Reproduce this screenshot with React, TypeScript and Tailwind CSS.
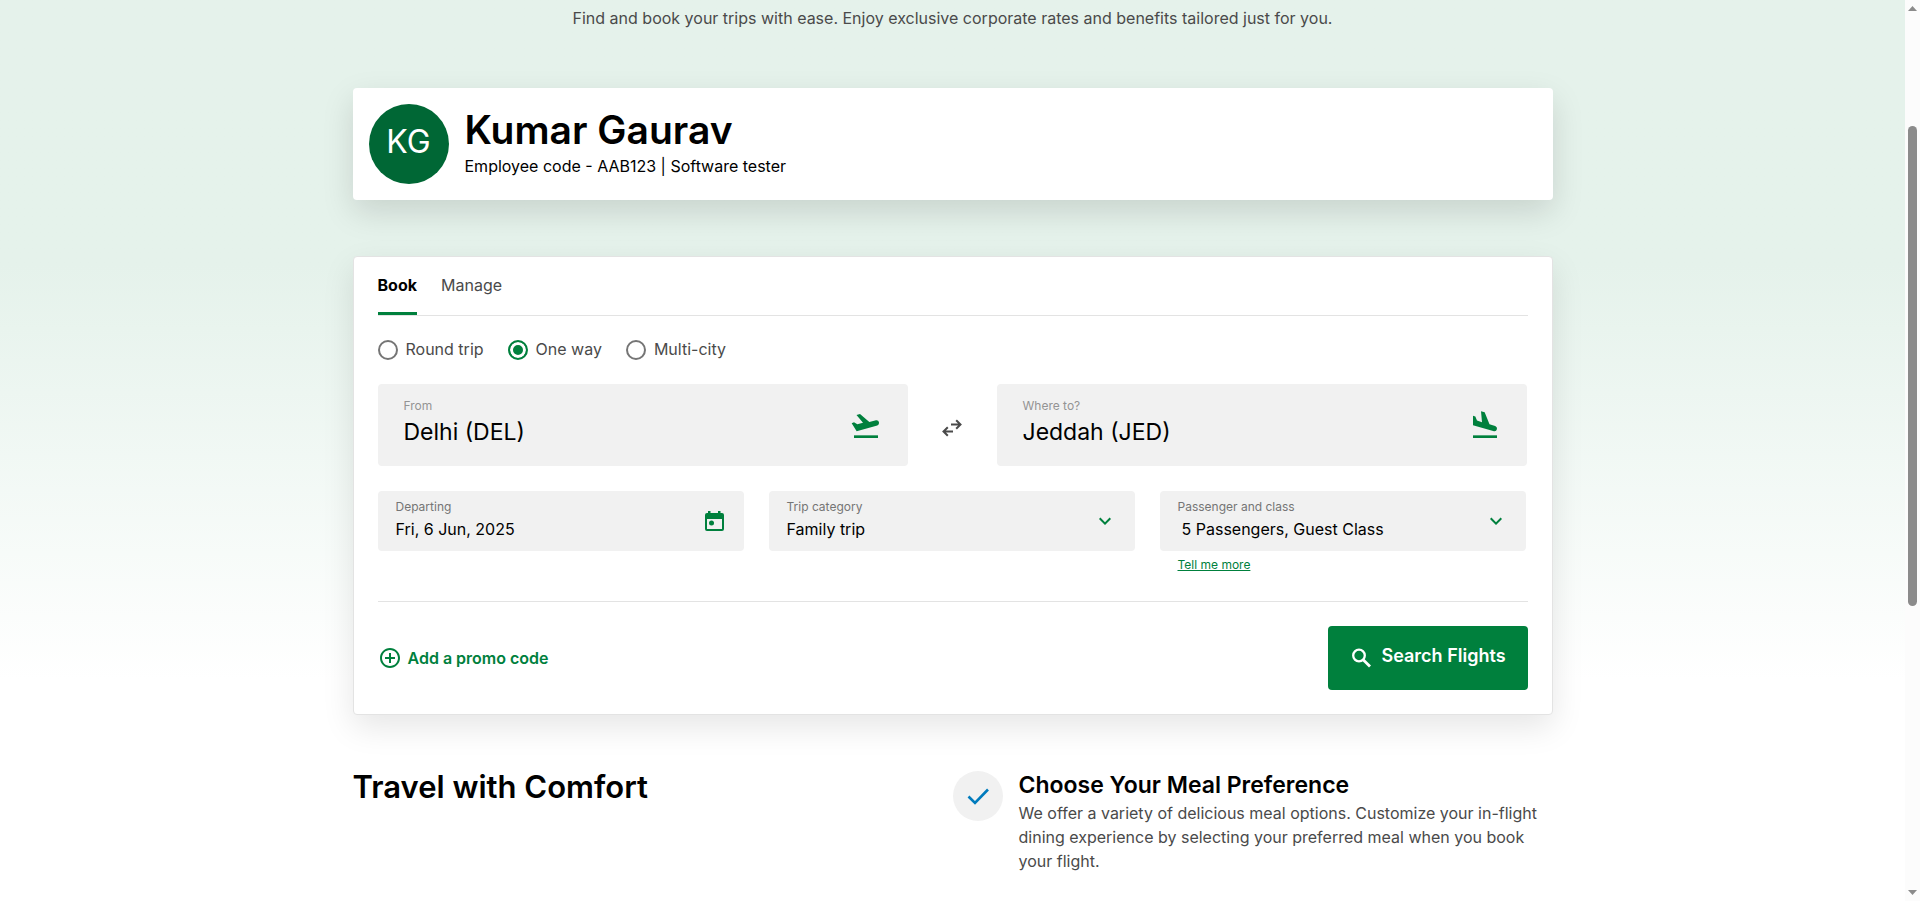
import React, { useState } from "react";
import { MdAddCircleOutline, MdExpandMore } from "react-icons/md";

const TRIP_TYPES = ["Round trip", "One way", "Multi-city"];

const BENEFITS = [
  {
    title: "Choose Your Meal Preference",
    body: "We offer a variety of delicious meal options. Customize your in-flight dining experience by selecting your preferred meal when you book your flight.",
  },
];

function TakeoffIcon() {
  return (
    <svg viewBox="30 27 96 96" className="size-8" fill="currentColor" aria-hidden="true">
      <path d="M35 69.500 42 67l10 6 17-4.500L49.500 45 60 42l28 24 20-5q7.500-1 9 6t-5 9.500L50 94z" />
      <path d="M42 106h72v8H42z" />
    </svg>
  );
}

function LandingIcon() {
  return (
    <svg viewBox="87 27 96 96" className="size-8" fill="currentColor" aria-hidden="true">
      <path d="M99 47.500l7 2 5 12 15 5.500-3-33 11 3 14.500 36 17 5q6.500 2.500 5.500 9-2 7.500-9 6.500L99 76z" />
      <path d="M99 106h72v8H99z" />
    </svg>
  );
}

function CalendarIcon() {
  return (
    <svg viewBox="0 0 24 24" className="size-6 shrink-0 text-[#00803d]" fill="currentColor" aria-hidden="true">
      <path fillRule="evenodd" d="M6 2h2.500v2h7.500V2h2.500v2H20a2 2 0 0 1 2 2v14a2 2 0 0 1-2 2H5a2 2 0 0 1-2-2V6a2 2 0 0 1 2-2h1zM5 10v10h15V10z" />
      <circle cx="9.500" cy="14" r="2.500" />
    </svg>
  );
}

function SearchIcon() {
  return (
    <svg viewBox="0 0 24 24" className="size-6" fill="none" stroke="currentColor" strokeWidth="2.300" aria-hidden="true">
      <circle cx="10" cy="9.500" r="5.800" />
      <path d="M14.200 13.700 21 20.500" strokeWidth="2.800" />
    </svg>
  );
}

function SwapIcon() {
  return (
    <svg viewBox="0 0 20 18" className="h-[18px] w-5" fill="none" stroke="currentColor" strokeWidth="2" aria-hidden="true">
      <path d="M9 5.500h9.500M14.200 1.200 18.500 5.500l-4.300 4.300M11 12.500H1.500M5.800 8.200 1.500 12.500l4.300 4.300" />
    </svg>
  );
}

function CheckBadge() {
  return (
    <span className="flex size-[50px] shrink-0 items-center justify-center rounded-full bg-[#f1f1f1] text-[#007bbd]">
      <svg viewBox="0 0 24 24" className="size-6" fill="none" stroke="currentColor" strokeWidth="2.600" aria-hidden="true">
        <path d="M2.500 12.500 9 19 22 5.500" />
      </svg>
    </span>
  );
}

function AirportField({ id, label, value, icon }: { id: string; label: string; value: string; icon: React.ReactNode }) {
  return (
    <div className="flex h-[82px] min-w-0 flex-1 items-center rounded bg-[#f1f1f1] px-[26px]">
      <div className="flex min-w-0 flex-1 flex-col pb-0.5">
        <label htmlFor={id} className="text-xs leading-4 text-[#949494]">{label}</label>
        <input id={id} defaultValue={value} className="w-full bg-transparent text-[23px] leading-9 text-black outline-none" />
      </div>
      <span className="text-[#00803d]">{icon}</span>
    </div>
  );
}

export default function App() {
  const [tripType, setTripType] = useState("One way");

  return (
    <div className="flex h-screen overflow-hidden bg-white font-['Inter','Liberation_Sans',sans-serif] text-base text-black">
      <main className="min-w-0 flex-1 overflow-hidden bg-linear-to-b from-[#e5f2eb] from-[265px] to-white to-[680px]">
        <p className="pt-1.5 text-center leading-6 text-[#4a4a4a]">
          Find and book your trips with ease. Enjoy exclusive corporate rates and benefits tailored just for you.
        </p>

        <div className="mx-auto mt-[58px] w-full max-w-[1200px]">
          <section className="flex items-center gap-4 rounded bg-white p-4 shadow-[0_12px_32px_rgba(0,0,0,0.13)]">
            <div className="flex size-20 shrink-0 items-center justify-center rounded-full bg-[#006735] pb-1 text-[32px] text-white">KG</div>
            <div className="pb-1">
              <h1 className="text-[39px] leading-[48px] font-semibold">Kumar Gaurav</h1>
              <p className="leading-6">Employee code - AAB123 | Software tester</p>
            </div>
          </section>

          <section className="mt-14 rounded border border-[#e3e3e3] bg-white px-6 pb-6 shadow-[0_12px_32px_rgba(0,0,0,0.1)]">
            <div role="tablist" className="flex gap-6 border-b border-[#e3e3e3]">
              <button role="tab" aria-selected="true" className="h-[58px] border-b-3 border-[#00803d] pt-px font-bold">Book</button>
              <button role="tab" aria-selected="false" className="h-[58px] border-b-3 border-transparent pt-px text-[#4a4a4a]">Manage</button>
            </div>

            <div className="mt-6 flex h-5 items-center gap-6">
              {TRIP_TYPES.map((type) => (
                <label key={type} className="flex items-center gap-2 text-[#4a4a4a]">
                  <input
                    type="radio"
                    name="trip"
                    checked={tripType === type}
                    onChange={() => setTripType(type)}
                    className="size-5 appearance-none rounded-full border-2 border-[#757575] bg-white checked:border-[#00803d] checked:bg-[#00803d] checked:shadow-[inset_0_0_0_3px_white]"
                  />
                  <span className="pb-0.5 leading-5">{type}</span>
                </label>
              ))}
            </div>

            <div className="mt-6 flex items-center pr-px">
              <AirportField id="from" label="From" value="Delhi (DEL)" icon={<TakeoffIcon />} />
              <button aria-label="Swap airports" className="flex w-[89px] justify-center pt-1.5 text-[#4a4a4a]"><SwapIcon /></button>
              <AirportField id="to" label="Where to?" value="Jeddah (JED)" icon={<LandingIcon />} />
            </div>

            <div className="mt-[25px] grid grid-cols-3 gap-[25px] pr-0.5">
              <div className="flex h-[60px] items-center rounded bg-[#f1f1f1] px-[18px]">
                <div className="flex min-w-0 flex-1 flex-col">
                  <label htmlFor="departing" className="text-xs leading-4 text-[#757575]">Departing</label>
                  <input id="departing" defaultValue="Fri, 6 Jun, 2025" className="w-full bg-transparent leading-7 outline-none" />
                </div>
                <CalendarIcon />
              </div>
              <div className="flex h-[60px] items-center rounded bg-[#f1f1f1] px-[18px]">
                <div className="flex min-w-0 flex-1 flex-col">
                  <label htmlFor="category" className="text-xs leading-4 text-[#757575]">Trip category</label>
                  <select id="category" className="w-full appearance-none bg-transparent leading-7 outline-none"><option>Family trip</option></select>
                </div>
                <MdExpandMore size={24} className="text-[#00803d]" />
              </div>
              <div>
                <div className="flex h-[60px] items-center rounded bg-[#f1f1f1] px-[18px]">
                  <div className="flex min-w-0 flex-1 flex-col">
                    <label htmlFor="passengers" className="text-xs leading-4 text-[#757575]">Passenger and class</label>
                    <select id="passengers" className="w-full appearance-none bg-transparent pl-1 leading-7 outline-none"><option>5 Passengers, Guest Class</option></select>
                  </div>
                  <MdExpandMore size={24} className="text-[#00803d]" />
                </div>
                <a href="#passengers" className="ml-[18px] mt-1 block text-xs leading-5 text-[#00803d] underline">Tell me more</a>
              </div>
            </div>

            <div className="mt-[26px] flex items-center justify-between border-t border-[#e3e3e3] pt-6">
              <button className="flex items-center gap-1.5 font-semibold text-[#00803d]">
                <MdAddCircleOutline size={24} />
                Add a promo code
              </button>
              <button className="flex h-16 w-[200px] items-center justify-center gap-2 rounded bg-[#00803d] text-lg font-semibold text-white">
                <SearchIcon />
                <span className="pb-1">Search Flights</span>
              </button>
            </div>
          </section>

          <section className="mt-14 grid grid-cols-2">
            <h2 className="text-[31px] leading-8 font-semibold">Travel with Comfort</h2>
            <ul className="flex flex-col gap-7">
              {BENEFITS.map((benefit) => (
                <li key={benefit.title} className="flex gap-4">
                  <CheckBadge />
                  <div>
                    <h3 className="mb-0.5 text-[23px] leading-7 font-semibold">{benefit.title}</h3>
                    <p className="leading-6 text-[#4a4a4a]">{benefit.body}</p>
                  </div>
                </li>
              ))}
              <li><CheckBadge /></li>
            </ul>
          </section>
        </div>
      </main>

      <div className="flex w-[15px] shrink-0 flex-col items-center bg-[#fcfcfc] py-1.5" aria-hidden="true">
        <svg viewBox="0 0 9 5" className="h-[5px] w-[9px]" fill="#8b8b8b"><path d="M4.500 0 9 5H0z" /></svg>
        <div className="mt-[115px] h-[480px] w-[9px] rounded-full bg-[#8b8b8b]" />
        <svg viewBox="0 0 9 5" className="mt-auto h-[5px] w-[9px]" fill="#8b8b8b"><path d="M4.500 5 9 0H0z" /></svg>
      </div>
    </div>
  );
}
